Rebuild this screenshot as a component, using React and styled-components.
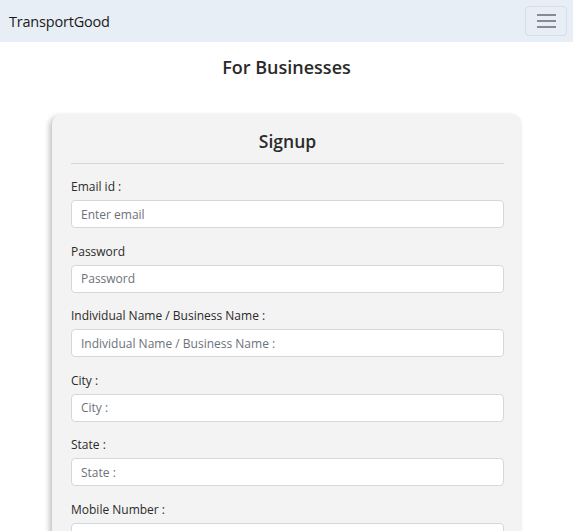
import React from 'react'
import styled, { createGlobalStyle } from 'styled-components'

const Global = createGlobalStyle`
  body {
    margin: 0;
    font-family: "Open Sans", "Noto Sans", sans-serif;
    background: #fff;
    color: #212529;
  }
  * { box-sizing: border-box; }
`

const Navbar = styled.nav`
  height: 42px;
  background: #e7eef5;
  display: flex;
  align-items: center;
  justify-content: space-between;
  padding: 0 6px 0 9px;
`

const Brand = styled.div`
  font-size: 14.5px;
  color: #1a1a1a;
  letter-spacing: -0.2px;
`

const Toggler = styled.button`
  width: 42px;
  height: 30px;
  border: 1px solid #d8dee4;
  border-radius: 4px;
  background: transparent;
  display: flex;
  flex-direction: column;
  align-items: center;
  justify-content: center;
  gap: 4px;
  padding: 0;
`

const Bar = styled.span`
  display: block;
  width: 19px;
  height: 2px;
  background: #858b90;
`

const Heading = styled.h2`
  margin: 13px 0 0;
  text-align: center;
  font-size: 18px;
  font-weight: 600;
  color: #2a2a2a;
  line-height: 24px;
`

const Main = styled.main`
  padding: 35px 0 0 1px;
`

const Card = styled.div`
  margin: 0 auto;
  width: 470px;
  background: #f3f3f3;
  border-radius: 10px;
  box-shadow: -3px 2px 5px rgba(0, 0, 0, 0.22);
  padding: 14px 18px 0 19px;
`

const CardTitle = styled.h3`
  margin: 0;
  text-align: center;
  font-size: 17.5px;
  font-weight: 600;
  color: #2a2a2a;
  line-height: 26px;
  padding-bottom: 9px;
  border-bottom: 1px solid #d4d6d8;
`

const Form = styled.div`
  padding-top: 14px;
  display: flex;
  flex-direction: column;
  gap: 14.5px;
`

const Field = styled.div`
  display: flex;
  flex-direction: column;
  gap: 4px;
`

const Label = styled.label`
  font-size: 12px;
  color: #2a2a2a;
  line-height: 18px;
`

const Input = styled.input`
  height: 28px;
  width: 100%;
  border: 1px solid #d3d8dd;
  border-radius: 4px;
  background: #fff;
  padding: 0 9px;
  font-family: inherit;
  font-size: 12px;
  color: #333;
  &::placeholder { color: #6c727a; }
`

const fields = [
  ['Email id :', 'Enter email'],
  ['Password', 'Password'],
  ['Individual Name / Business Name :', 'Individual Name / Business Name :'],
  ['City :', 'City :'],
  ['State :', 'State :'],
  ['Mobile Number :', ''],
]

export default function App() {
  return (
    <>
      <Global />
      <Navbar>
        <Brand>TransportGood</Brand>
        <Toggler>
          <Bar />
          <Bar />
          <Bar />
        </Toggler>
      </Navbar>
      <Heading>For Businesses</Heading>
      <Main>
        <Card>
          <CardTitle>Signup</CardTitle>
          <Form>
            {fields.map(([label, ph]) => (
              <Field key={label}>
                <Label>{label}</Label>
                <Input placeholder={ph} type={label === 'Password' ? 'password' : 'text'} />
              </Field>
            ))}
          </Form>
        </Card>
      </Main>
    </>
  )
}
